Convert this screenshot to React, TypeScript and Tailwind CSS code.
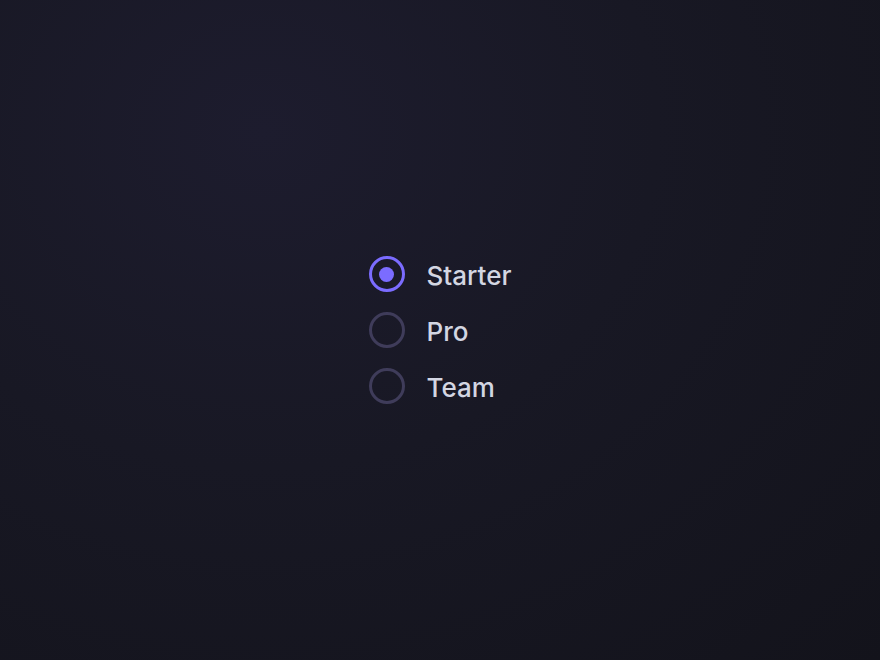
import React, { useState } from "react";

const options = ["Starter", "Pro", "Team"];

export default function App() {
  const [value, setValue] = useState("Starter");
  return (
    <div
      className="w-full h-[660px] flex items-center justify-center bg-[radial-gradient(ellipse_at_30%_20%,#1d1c2e_0%,#181824_45%,#13131b_100%)]"
      style={{ fontFamily: "Inter, 'Noto Sans', sans-serif" }}
    >
      <div role="radiogroup" className="flex flex-col gap-5">
        {options.map((o) => {
          const checked = value === o;
          return (
            <label
              key={o}
              className="flex items-center gap-[22px] h-9 cursor-pointer"
              onClick={() => setValue(o)}
            >
              <span
                className={
                  checked
                    ? "w-9 h-9 rounded-full border-[3.5px] border-[#7b6cff] flex items-center justify-center"
                    : "w-9 h-9 rounded-full border-[3.5px] border-[#3f3c5a] flex items-center justify-center"
                }
              >
                {checked && <span className="w-[15px] h-[15px] rounded-full bg-[#7b6cff]" />}
              </span>
              <span className="text-[26px] leading-none pt-[3px] font-medium text-[#d3d6e2]">{o}</span>
            </label>
          );
        })}
      </div>
    </div>
  );
}
